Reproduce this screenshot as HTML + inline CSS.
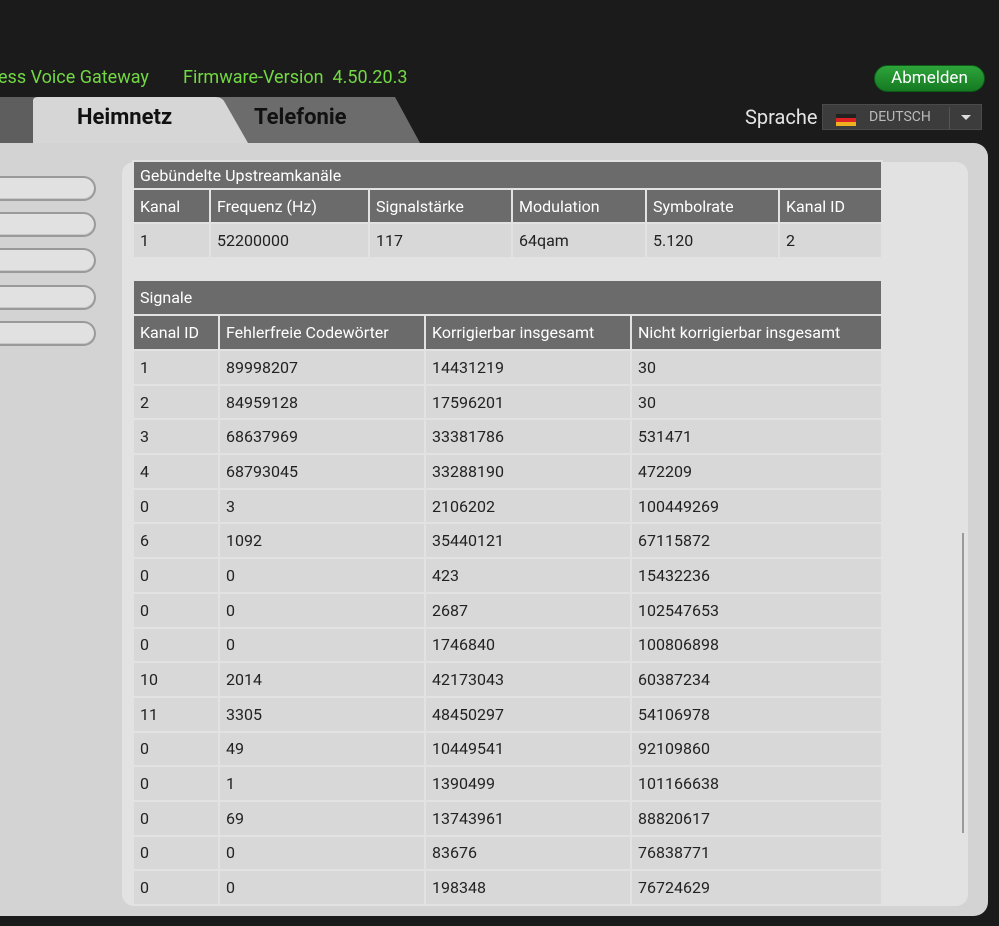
<!DOCTYPE html>
<html><head><meta charset="utf-8"><style>
*{margin:0;padding:0;box-sizing:border-box}
body{width:999px;height:926px;background:#1b1b1b;position:relative;overflow:hidden;font-family:"Roboto","Liberation Sans",sans-serif}
.g{position:absolute;top:67px;color:#72d843;font-size:18px}
.outer{position:absolute;left:0;top:143px;width:988px;height:773px;background:#d3d3d3;border-radius:0 14px 14px 0}
.inner{position:absolute;left:122px;top:162px;width:846px;height:744px;background:#e2e2e2;border-radius:12px}
.pill{position:absolute;left:-20px;width:116px;height:25px;background:#e1e1e1;border-radius:0 13px 13px 0;border:2px solid #9a9a9a;border-left:none;box-shadow:inset 0 -1px 0 #c8c8c8}
table{position:absolute;border-collapse:collapse;table-layout:fixed;font-size:16px;color:#222}
td{border:2px solid #e2e2e2;padding:0 6px;vertical-align:middle;background:#d8d8d8;white-space:nowrap}
td.h{background:#6b6b6b;color:#fff;font-weight:normal;text-align:left;border:2px solid #e2e2e2;padding:0 6px}
</style></head><body>
<div class="g" style="left:-2px">ess Voice Gateway</div>
<div class="g" style="left:183px">Firmware-Version&nbsp; 4.50.20.3</div>
<div style="position:absolute;left:874px;top:65px;width:111px;height:27px;border-radius:14px;background:linear-gradient(#2ea43a,#157a22);border:1px solid #0d5a17;color:#fff;font-size:17px;text-align:center;line-height:24px">Abmelden</div>
<div style="position:absolute;left:745px;top:105px;color:#e4e4e4;font-size:20px">Sprache</div>
<div style="position:absolute;left:822px;top:104px;width:160px;height:26px;background:#3c3c3c;border:1px solid #4a4a4a">
 <div style="position:absolute;left:13px;top:9px;width:20px;height:12px;background:linear-gradient(#222 0 33%,#d22 33% 66%,#f0b020 66%)"></div>
 <div style="position:absolute;left:46px;top:4px;color:#bbb;font-size:14px">DEUTSCH</div>
 <div style="position:absolute;left:126px;top:2px;width:1px;height:22px;background:#555"></div>
 <div style="position:absolute;left:138px;top:10px;border-left:5px solid transparent;border-right:5px solid transparent;border-top:5px solid #ddd"></div>
</div>
<div style="position:absolute;left:0;top:97px;width:40px;height:46px;background:#5e5e5e"></div>
<svg style="position:absolute;left:0;top:95px" width="430" height="50"><polygon points="218,2 395,2 420,48 245,48" fill="#6c6c6c"/><path d="M33,48 V6 Q33,2 38,2 H216 Q221,2 224,6 L248,48 Z" fill="#d6d6d6"/></svg>
<div style="position:absolute;left:77px;top:105px;font-size:22px;font-weight:bold;color:#111">Heimnetz</div>
<div style="position:absolute;left:254px;top:105px;font-size:22px;font-weight:bold;color:#111">Telefonie</div>
<div class="outer"></div>
<div class="pill" style="top:176px"></div><div class="pill" style="top:212px"></div><div class="pill" style="top:248px"></div><div class="pill" style="top:285px"></div><div class="pill" style="top:321px"></div>
<div class="inner"></div>
<div style="position:absolute;left:962px;top:533px;width:2px;height:300px;background:#999"></div>
<table style="left:132px;top:160px;width:749px">
<colgroup><col style="width:77px"><col style="width:159px"><col style="width:143px"><col style="width:134px"><col style="width:133px"><col style="width:103px"></colgroup>
<tr style="height:28px"><td class="h" colspan="6" style="font-size:16px">Gebündelte Upstreamkanäle</td></tr>
<tr style="height:34px"><td class="h">Kanal</td><td class="h">Frequenz (Hz)</td><td class="h">Signalstärke</td><td class="h">Modulation</td><td class="h">Symbolrate</td><td class="h">Kanal ID</td></tr>
<tr style="height:35px"><td>1</td><td>52200000</td><td>117</td><td>64qam</td><td>5.120</td><td>2</td></tr>
</table>
<table style="left:132px;top:279px;width:749px">
<colgroup><col style="width:86px"><col style="width:206px"><col style="width:206px"><col style="width:251px"></colgroup>
<tr style="height:35px"><td class="h" colspan="4">Signale</td></tr>
<tr style="height:35px"><td class="h">Kanal ID</td><td class="h">Fehlerfreie Codewörter</td><td class="h">Korrigierbar insgesamt</td><td class="h">Nicht korrigierbar insgesamt</td></tr>
<tr style="height:34.7px"><td>1</td><td>89998207</td><td>14431219</td><td>30</td></tr>
<tr style="height:34.7px"><td>2</td><td>84959128</td><td>17596201</td><td>30</td></tr>
<tr style="height:34.7px"><td>3</td><td>68637969</td><td>33381786</td><td>531471</td></tr>
<tr style="height:34.7px"><td>4</td><td>68793045</td><td>33288190</td><td>472209</td></tr>
<tr style="height:34.7px"><td>0</td><td>3</td><td>2106202</td><td>100449269</td></tr>
<tr style="height:34.7px"><td>6</td><td>1092</td><td>35440121</td><td>67115872</td></tr>
<tr style="height:34.7px"><td>0</td><td>0</td><td>423</td><td>15432236</td></tr>
<tr style="height:34.7px"><td>0</td><td>0</td><td>2687</td><td>102547653</td></tr>
<tr style="height:34.7px"><td>0</td><td>0</td><td>1746840</td><td>100806898</td></tr>
<tr style="height:34.7px"><td>10</td><td>2014</td><td>42173043</td><td>60387234</td></tr>
<tr style="height:34.7px"><td>11</td><td>3305</td><td>48450297</td><td>54106978</td></tr>
<tr style="height:34.7px"><td>0</td><td>49</td><td>10449541</td><td>92109860</td></tr>
<tr style="height:34.7px"><td>0</td><td>1</td><td>1390499</td><td>101166638</td></tr>
<tr style="height:34.7px"><td>0</td><td>69</td><td>13743961</td><td>88820617</td></tr>
<tr style="height:34.7px"><td>0</td><td>0</td><td>83676</td><td>76838771</td></tr>
<tr style="height:34.7px"><td>0</td><td>0</td><td>198348</td><td>76724629</td></tr>
</table>
</body></html>
